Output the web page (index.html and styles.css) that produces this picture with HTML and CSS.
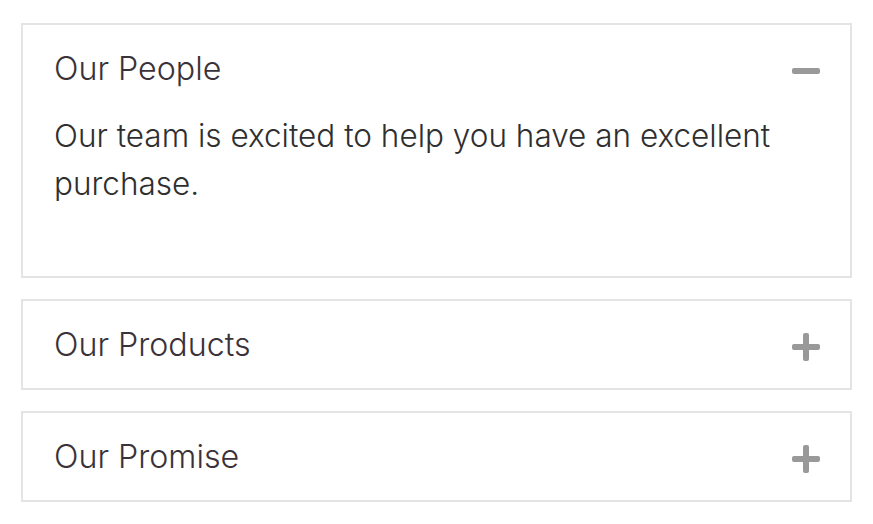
FILE: index.html
```html
<!DOCTYPE html>
<html lang="en">
<head>
<meta charset="utf-8">
<title>Accordion</title>
<link rel="stylesheet" href="styles.css">
</head>
<body>
<div class="accordion">
  <section class="item open">
    <div class="head">
      <span class="title">Our People</span>
      <span class="icon minus"></span>
    </div>
    <div class="body">
      <p>Our team is excited to help you have an excellent purchase.</p>
    </div>
  </section>
  <section class="item">
    <div class="head">
      <span class="title">Our Products</span>
      <span class="icon plus"></span>
    </div>
  </section>
  <section class="item">
    <div class="head">
      <span class="title">Our Promise</span>
      <span class="icon plus"></span>
    </div>
  </section>
</div>
</body>
</html>
```
FILE: styles.css
```css
html, body {
  margin: 0;
  padding: 0;
  background: #fff;
}
body {
  font-family: "Inter", sans-serif;
  color: #333;
}
.accordion {
  padding: 23px 21px 0 21px;
  display: flex;
  flex-direction: column;
  gap: 21px;
}
.item {
  border: 2px solid #e4e4e4;
}
.head {
  display: flex;
  align-items: center;
  justify-content: space-between;
  padding: 21px 30px 20px 31px;
  height: 46px;
}
.title {
  font-size: 32.2px;
  font-weight: 300;
  color: #3a3238;
  margin-top: -1px;
}
.icon {
  position: relative;
  width: 28px;
  height: 28px;
  margin-top: 4px;
}
.icon::before,
.icon::after {
  content: "";
  position: absolute;
  background: #999;
  border-radius: 2px;
}
.icon::before {
  left: 0;
  top: 11px;
  width: 28px;
  height: 6px;
}
.plus::after {
  left: 11px;
  top: 0;
  width: 6px;
  height: 28px;
}
.body {
  padding: 0 31px 68px 31px;
}
.body p {
  margin: 0;
  font-size: 31.5px;
  font-weight: 300;
  line-height: 48px;
  color: #2f2f2f;
}
```
